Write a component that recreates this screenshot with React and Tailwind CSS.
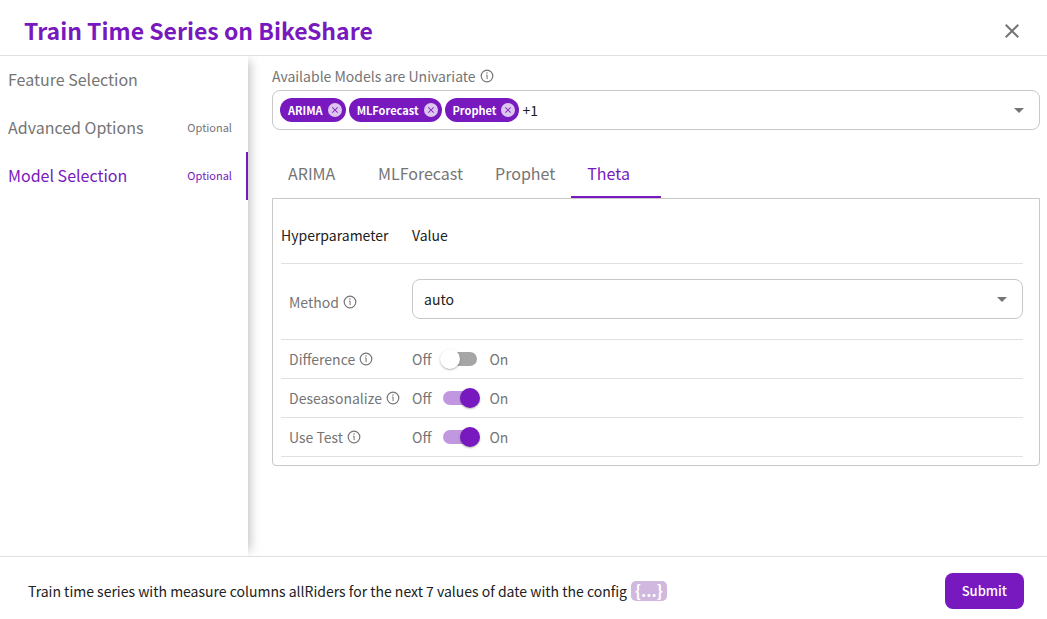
import React, { useState } from 'react';
import { MdArrowDropDown, MdClose } from 'react-icons/md';
import clsx from 'clsx';

const steps = [
    { name: 'Feature Selection', optional: false },
    { name: 'Advanced Options', optional: true },
    { name: 'Model Selection', optional: true },
];

const models = ['ARIMA', 'MLForecast', 'Prophet', 'Theta'];

const toggles = [
    { name: 'Difference', value: false },
    { name: 'Deseasonalize', value: true },
    { name: 'Use Test', value: true },
];

export default function App() {
    const [step, setStep] = useState('Model Selection');
    const [tab, setTab] = useState('Theta');

    return (
        <div className="flex min-h-screen flex-col bg-white font-['Noto_Sans_CJK_SC','Noto_Sans',sans-serif] text-[#212121]">
            {/* Header */}
            <header className="flex h-14 items-center justify-between border-b border-[#e0e0e0] pl-6 pr-[23px] pt-1">
                <h1 className="text-[23px] font-bold leading-8 text-[#7719be]">Train Time Series on BikeShare</h1>
                <button type="button" aria-label="Close" className="pt-[2px] text-[#757575]">
                    <MdClose className="size-6" />
                </button>
            </header>

            <div className="flex flex-1 overflow-hidden">
                {/* Steps */}
                <nav className="w-[248px] shrink-0 shadow-[7px_0_10px_-5px_rgba(0,0,0,0.25)]">
                    {steps.map((item) => (
                        <button
                            key={item.name}
                            type="button"
                            onClick={() => setStep(item.name)}
                            className={clsx(
                                'flex h-12 w-full items-center justify-between border-r-2 pb-[2px] pl-2 pr-[14px]',
                                step === item.name ? 'border-[#7719be] text-[#7719be]' : 'border-transparent text-[#757575]'
                            )}
                        >
                            <span className="text-base leading-6">{item.name}</span>
                            {item.optional && <span className="text-[11px] leading-4">Optional</span>}
                        </button>
                    ))}
                </nav>

                <main className="min-w-0 flex-1 pb-6 pl-6 pr-[7px] pt-2">
                    {/* Model picker */}
                    <label htmlFor="models" className="flex items-center gap-1 pb-[2px] text-sm leading-6 text-[#757575]">
                        Available Models are Univariate <InfoIcon />
                    </label>
                    <div className="flex h-10 items-center gap-[3px] rounded-lg border border-[#c8c8c8] pl-[7px] pr-2">
                        {models.slice(0, 3).map((model) => (
                            <Chip key={model} label={model} />
                        ))}
                        <span className="text-sm leading-6">+1</span>
                        <input id="models" type="text" className="h-6 min-w-0 flex-1 text-sm outline-none" />
                        <button type="button" aria-label="Open" className="text-[#757575]">
                            <MdArrowDropDown className="size-6" />
                        </button>
                    </div>

                    {/* Tabs */}
                    <div role="tablist" className="mt-5 flex">
                        {models.map((model) => (
                            <button
                                key={model}
                                type="button"
                                role="tab"
                                aria-selected={tab === model}
                                onClick={() => setTab(model)}
                                className={clsx(
                                    'h-12 min-w-[90px] border-b-2 px-4 text-left text-base leading-6',
                                    tab === model ? 'border-[#7719be] text-[#7719be]' : 'border-transparent text-[#757575]'
                                )}
                            >
                                {model}
                            </button>
                        ))}
                    </div>

                    {/* Hyperparameters */}
                    <div role="tabpanel" className="rounded-b border border-[#c8c8c8] pb-2 pl-2 pr-4 pt-2">
                        <table className="w-full border-separate border-spacing-0 text-sm leading-6">
                            <thead>
                                <tr className="h-[57px] text-left">
                                    <th className="w-[131px] border-b border-[#e0e0e0] font-normal">Hyperparameter</th>
                                    <th className="border-b border-[#e0e0e0] font-normal">Value</th>
                                </tr>
                            </thead>
                            <tbody>
                                <tr>
                                    <td className="border-b border-[#e0e0e0] pl-2 text-[#757575]">
                                        <Name id="method" text="Method" />
                                    </td>
                                    <td className="border-b border-[#e0e0e0] pb-5 pt-[15px]">
                                        <div className="relative">
                                            <select
                                                id="method"
                                                defaultValue="auto"
                                                className="block h-10 w-full appearance-none rounded-lg border border-[#c8c8c8] bg-white pl-[11px] pr-10 text-sm text-[#212121]"
                                            >
                                                <option value="auto">auto</option>
                                                <option value="additive">additive</option>
                                                <option value="multiplicative">multiplicative</option>
                                            </select>
                                            <MdArrowDropDown className="pointer-events-none absolute right-[9px] top-2 size-6 text-[#757575]" />
                                        </div>
                                    </td>
                                </tr>
                                {toggles.map((toggle) => (
                                    <tr key={toggle.name} className="h-[39px] text-[#757575]">
                                        <td className="border-b border-[#e0e0e0] pl-2">
                                            <Name id={toggle.name} text={toggle.name} />
                                        </td>
                                        <td className="border-b border-[#e0e0e0]">
                                            <Toggle id={toggle.name} initial={toggle.value} />
                                        </td>
                                    </tr>
                                ))}
                            </tbody>
                        </table>
                    </div>
                </main>
            </div>

            {/* Footer */}
            <footer className="flex items-center justify-between gap-4 border-t border-[#e0e0e0] pb-[10px] pl-7 pr-[23px] pt-4 text-sm">
                <p className="flex items-center gap-1 leading-6">
                    Train time series with measure columns allRiders for the next 7 values of date with the config
                    <button type="button" className="flex h-5 items-center rounded-[5px] bg-[#d0b8de] px-1 pb-[2px] text-base font-bold leading-4 text-white">
                        {'{...}'}
                    </button>
                </p>
                <button type="button" className="h-9 rounded-lg bg-[#7719be] px-[17px] text-[13px] font-medium text-white">
                    Submit
                </button>
            </footer>
        </div>
    );
}

function InfoIcon() {
    return (
        <svg viewBox="0 0 14 14" className="size-[14px]" fill="none" stroke="currentColor" aria-hidden="true">
            <circle cx="7" cy="7" r="5.8" strokeWidth="1.2" />
            <path d="M6 6.1h1.1v4" strokeWidth="1" />
            <circle cx="7" cy="4.1" r="0.75" fill="currentColor" stroke="none" />
        </svg>
    );
}

function Chip({ label }) {
    return (
        <span className="flex h-6 items-center gap-[5px] rounded-full bg-[#7719be] pl-2 pr-1 text-[11px] font-bold text-white">
            {label}
            <button
                type="button"
                aria-label={`Remove ${label}`}
                className="flex size-[14px] items-center justify-center rounded-full bg-[#dcc5ee] text-[#7719be]"
            >
                <MdClose className="size-[10px]" />
            </button>
        </span>
    );
}

function Name({ id, text }) {
    return (
        <label htmlFor={id} className="flex items-center gap-1">
            {text} <InfoIcon />
        </label>
    );
}

function Toggle({ id, initial }) {
    const [on, setOn] = useState(initial);

    return (
        <div className="flex items-center gap-3">
            <span>Off</span>
            <input
                id={id}
                type="checkbox"
                role="switch"
                checked={on}
                onChange={(e) => setOn(e.target.checked)}
                className="flex h-[14px] w-[34px] appearance-none items-center rounded-full bg-[#a6a6a6] before:-ml-[3px] before:block before:size-5 before:shrink-0 before:rounded-full before:bg-white before:shadow-[0_1px_2px_rgba(0,0,0,0.3)] checked:bg-[#c198df] checked:before:translate-x-5 checked:before:bg-[#7719be]"
            />
            <span>On</span>
        </div>
    );
}
